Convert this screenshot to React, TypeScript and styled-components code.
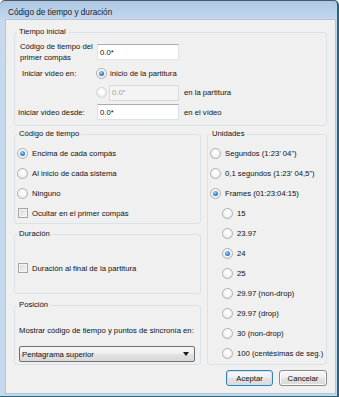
import React from 'react';
import styled, { createGlobalStyle } from 'styled-components';

const GlobalStyle = createGlobalStyle`
  html, body {
    margin: 0;
    padding: 0;
    background: #ffffff;
  }
  body {
    font-family: "Liberation Sans", Arial, sans-serif;
    font-size: 7.7px;
    color: #111;
  }
`;

// Window chrome
const Window = styled.div`
  width: 339px;
  height: 397px;
  box-sizing: border-box;
  display: flex;
  flex-direction: column;
  background: linear-gradient(to bottom, #adc7e4 0px, #c6d9ee 20px, #c4d8ee 100%);
  border-top: 1px solid #4b5866;
  border-right: 2px solid #2f6577;
  border-bottom: 1px solid #2f6577;
  border-radius: 5px 5px 0 0;
  overflow: hidden;
`;

const TitleBar = styled.div`
  height: 19px;
  box-sizing: border-box;
  padding: 6px 0 0 8px;
  line-height: 12px;
  font-size: 8.2px;
  color: #1a1a1a;
`;

const Client = styled.div`
  flex: 1;
  margin: 0 2px 3px 6px;
  padding: 6px 8px 0 8px;
  background: #f0f0f0;
  box-shadow: 0 0 0 1px #b3c6da;
  display: flex;
  flex-direction: column;
`;

// Group boxes
const Group = styled.fieldset<{ $top?: number }>`
  margin: ${p => p.$top ?? 0}px 0 0 0;
  padding: 0;
  min-width: 0;
  border: 1px solid #d9e2e8;
  border-radius: 3px;
  box-sizing: border-box;
`;

const GroupTitle = styled.legend`
  margin-left: 2px;
  padding: 0 2px;
  line-height: 12px;
  height: 12px;
`;

const GroupBody = styled.div<{ $pad: string }>`
  padding: ${p => p.$pad};
  display: flex;
  flex-direction: column;
`;

const Row = styled.div<{ $h: number; $indent?: number }>`
  height: ${p => p.$h}px;
  display: flex;
  align-items: center;
  padding-left: ${p => p.$indent ?? 0}px;
  white-space: nowrap;
`;

const FieldLabel = styled.div<{ $w: number; $shift?: number }>`
  width: ${p => p.$w}px;
  margin-left: ${p => p.$shift ?? 0}px;
  line-height: 11px;
  flex: none;
`;

const TextBox = styled.input<{ $w: number }>`
  width: ${p => p.$w}px;
  height: 16px;
  box-sizing: border-box;
  margin: 0;
  padding: 0 0 0 2px;
  font-family: inherit;
  font-size: 7.7px;
  color: #111;
  background: #fff;
  border: 1px solid #dde2e8;
  border-top-color: #abadb3;
  outline: none;
  flex: none;

  &:disabled {
    background: #f4f4f4;
    color: #9c9c9c;
    border-color: #d9d9d9;
  }
`;

const Suffix = styled.span`
  margin-left: 5px;
`;

const Radio = styled.span<{ $checked?: boolean; $disabled?: boolean }>`
  width: 11px;
  height: 11px;
  box-sizing: border-box;
  border-radius: 50%;
  border: 1px solid ${p => (p.$disabled ? '#d3d3d3' : '#b0b0b0')};
  background: radial-gradient(circle at 50% 40%, #ffffff 20%, #e2e2e2 100%);
  display: flex;
  align-items: center;
  justify-content: center;
  flex: none;

  &::after {
    content: '';
    display: ${p => (p.$checked ? 'block' : 'none')};
    width: 5px;
    height: 5px;
    border-radius: 50%;
    background: radial-gradient(circle at 40% 35%, #a6d3fa 0%, #3f8bd9 50%, #1b4f92 100%);
  }
`;

const Check = styled.span`
  width: 10px;
  height: 10px;
  box-sizing: border-box;
  border: 1px solid #a6a6a6;
  background: linear-gradient(135deg, #d8d8d8, #f7f7f7);
  box-shadow: inset 0 0 0 1px #f4f4f4;
  flex: none;
  margin-left: 1px;
`;

const OptionText = styled.span<{ $gap?: number }>`
  margin-left: ${p => p.$gap ?? 4}px;
`;

const Columns = styled.div`
  display: flex;
  gap: 6px;
  margin-top: 2px;
`;

const LeftColumn = styled.div`
  width: 187px;
  display: flex;
  flex-direction: column;
`;

const RightColumn = styled.div`
  width: 120px;
  display: flex;
  flex-direction: column;
`;

const Select = styled.div`
  width: 176px;
  height: 16px;
  box-sizing: border-box;
  margin-top: 6px;
  padding: 0 5px 0 2px;
  border: 1px solid #707070;
  border-radius: 2px;
  background: linear-gradient(#f6f6f6 0%, #eeeeee 50%, #e2e2e2 51%, #d9d9d9 100%);
  display: flex;
  align-items: center;
  justify-content: space-between;
`;

const Arrow = styled.span`
  width: 0;
  height: 0;
  border-left: 3px solid transparent;
  border-right: 3px solid transparent;
  border-top: 4px solid #1a1a1a;
`;

const Buttons = styled.div`
  display: flex;
  justify-content: flex-end;
  gap: 6px;
  margin-top: 5px;
`;

const Button = styled.button<{ $w: number; $primary?: boolean }>`
  width: ${p => p.$w}px;
  height: 16px;
  margin: 0;
  padding: 0;
  font-family: inherit;
  font-size: 7.7px;
  color: #111;
  border: 1px solid ${p => (p.$primary ? '#3c7fb1' : '#8a8a8a')};
  border-radius: 3px;
  background: linear-gradient(#f7f7f7 0%, #efefef 50%, #e3e3e3 51%, #dadada 100%);
  box-shadow: inset 0 0 0 1px ${p => (p.$primary ? '#c4e5f6' : '#fbfbfb')};
`;

const units = ['Segundos (1:23\u2019 04")', '0,1 segundos (1:23\u2019 04,5")', 'Frames (01:23:04:15)'];
const rates = ['15', '23.97', '24', '25', '29.97 (non-drop)', '29.97 (drop)', '30 (non-drop)', '100 (centésimas de seg.)'];

export default function App() {
  return (
    <>
      <GlobalStyle />
      <Window>
        <TitleBar>Código de tiempo y duración</TitleBar>
        <Client>
          <Group>
            <GroupTitle>Tiempo inicial</GroupTitle>
            <GroupBody $pad="3px 0 3px 5px">
              <Row $h={22}>
                <FieldLabel $w={77}>
                  Código de tiempo del
                  <br />
                  primer compás
                </FieldLabel>
                <TextBox $w={82} readOnly value="0.0*" />
              </Row>
              <Row $h={20}>
                <FieldLabel $w={74} $shift={2}>Iniciar vídeo en:</FieldLabel>
                <Radio $checked />
                <OptionText $gap={3}>inicio de la partitura</OptionText>
              </Row>
              <Row $h={19} $indent={76}>
                <Radio $disabled />
                <TextBox $w={70} disabled value={'0.0\u2033'} style={{ marginLeft: 2 }} />
                <Suffix>en la partitura</Suffix>
              </Row>
              <Row $h={20}>
                <FieldLabel $w={79} $shift={-2}>Iniciar vídeo desde:</FieldLabel>
                <TextBox $w={82} readOnly value="0.0*" />
                <Suffix>en el vídeo</Suffix>
              </Row>
            </GroupBody>
          </Group>

          <Columns>
            <LeftColumn>
              <Group>
                <GroupTitle>Código de tiempo</GroupTitle>
                <GroupBody $pad="3px 0 0 2px">
                  <Row $h={20}>
                    <Radio $checked />
                    <OptionText>Encima de cada compás</OptionText>
                  </Row>
                  <Row $h={20}>
                    <Radio />
                    <OptionText>Al inicio de cada sistema</OptionText>
                  </Row>
                  <Row $h={20}>
                    <Radio />
                    <OptionText>Ninguno</OptionText>
                  </Row>
                  <Row $h={20}>
                    <Check />
                    <OptionText>Ocultar en el primer compás</OptionText>
                  </Row>
                </GroupBody>
              </Group>

              <Group $top={4}>
                <GroupTitle>Duración</GroupTitle>
                <GroupBody $pad="18px 0 15px 2px">
                  <Row $h={20}>
                    <Check />
                    <OptionText>Duración al final de la partitura</OptionText>
                  </Row>
                </GroupBody>
              </Group>

              <Group $top={5}>
                <GroupTitle>Posición</GroupTitle>
                <GroupBody $pad="9px 0 2px 4px">
                  <Row $h={20}>Mostrar código de tiempo y puntos de sincronía en:</Row>
                  <Select>
                    <span>Pentagrama superior</span>
                    <Arrow />
                  </Select>
                </GroupBody>
              </Group>
            </LeftColumn>

            <RightColumn>
              <Group style={{ flex: 1 }}>
                <GroupTitle>Unidades</GroupTitle>
                <GroupBody $pad="3px 0 0 2px">
                  {units.map((u, i) => (
                    <Row key={u} $h={20}>
                      <Radio $checked={i === 2} />
                      <OptionText>{u}</OptionText>
                    </Row>
                  ))}
                  {rates.map(r => (
                    <Row key={r} $h={20} $indent={12}>
                      <Radio $checked={r === '24'} />
                      <OptionText>{r}</OptionText>
                    </Row>
                  ))}
                </GroupBody>
              </Group>
            </RightColumn>
          </Columns>

          <Buttons>
            <Button $w={47} $primary>Aceptar</Button>
            <Button $w={48}>Cancelar</Button>
          </Buttons>
        </Client>
      </Window>
    </>
  );
}
